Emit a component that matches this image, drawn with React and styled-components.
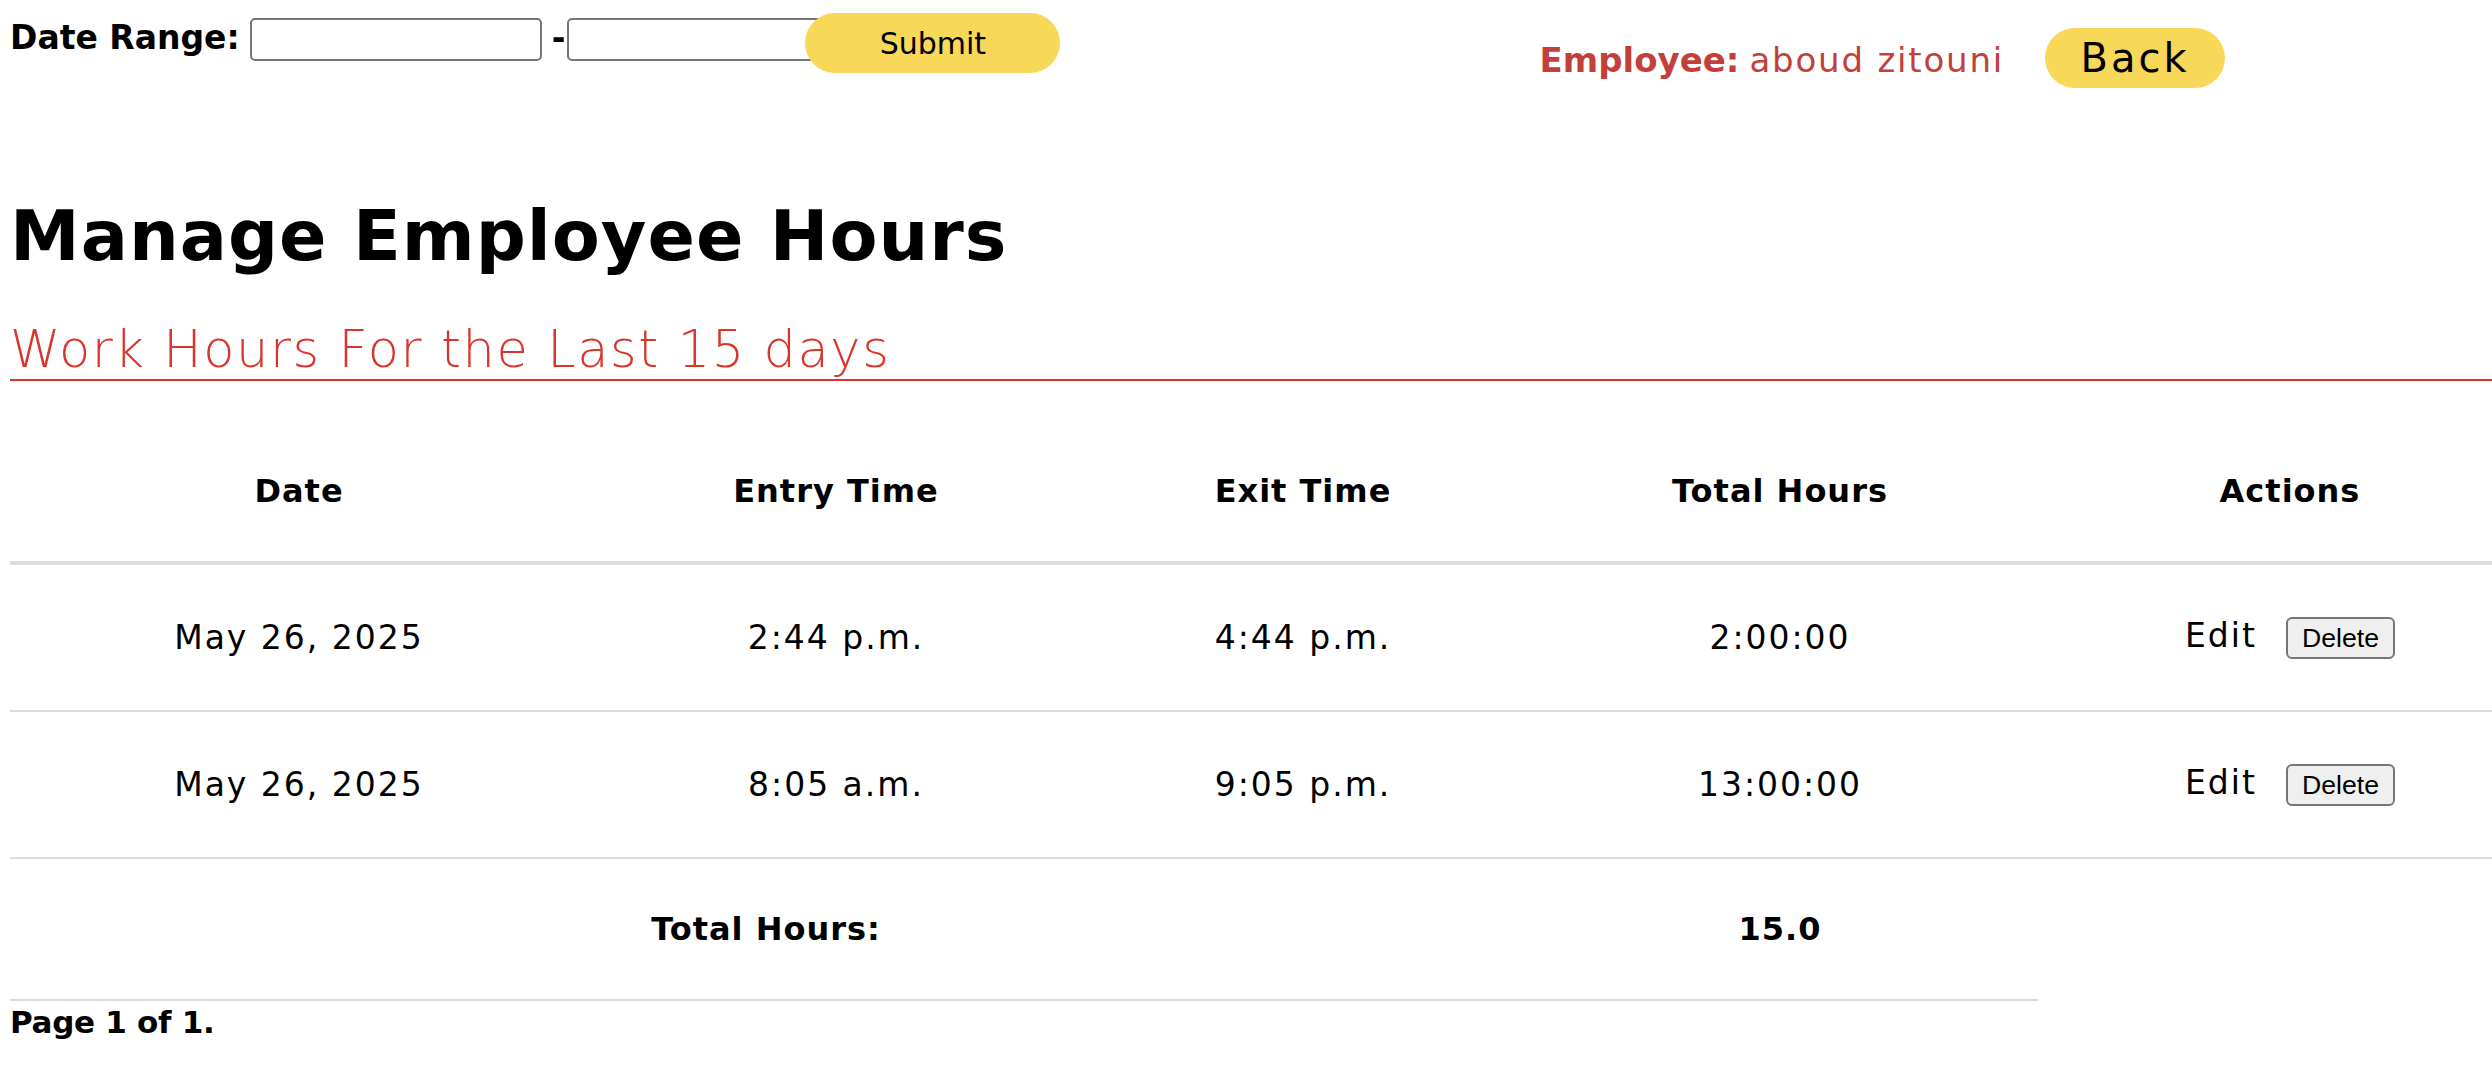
import React from "react";
import styled, { createGlobalStyle } from "styled-components";

const Global = createGlobalStyle`
  html, body { margin: 0; padding: 0; background: #ffffff; overflow-x: hidden; }
  body { font-family: "DejaVu Sans", "Liberation Sans", sans-serif; color: #000; }
  * { box-sizing: border-box; }
`;

const Page = styled.div`
  padding-left: 10px;
`;

const TopBar = styled.header`
  display: flex;
  align-items: flex-start;
  padding-right: 267px;
  height: 88px;
`;

const RangeForm = styled.form`
  display: flex;
  align-items: flex-start;
  padding-top: 13px;
`;

const RangeLabel = styled.label`
  font-size: 33px;
  font-weight: 700;
  margin-top: 5px;
  margin-right: 10px;
  white-space: nowrap;
`;

const DateInput = styled.input`
  width: 292px;
  height: 43px;
  margin-top: 5px;
  border: 2px solid #767676;
  border-radius: 5px;
  background: #fff;
  font-size: 26px;
  padding: 0 6px;
`;

const Dash = styled.span`
  font-size: 33px;
  font-weight: 700;
  margin: 8px 2px 0 10px;
  line-height: 1;
`;

const PillButton = styled.button`
  height: 60px;
  width: ${(p) => p.$w}px;
  margin-left: ${(p) => p.$shift || 0}px;
  border: none;
  border-radius: 30px;
  background: #f7d859;
  color: #000;
  font-family: "DejaVu Sans", sans-serif;
  font-size: ${(p) => p.$size}px;
  letter-spacing: ${(p) => p.$ls || 0}px;
  padding: 0;
  cursor: pointer;
`;

const EmployeeBox = styled.div`
  margin-left: auto;
  padding-top: 28px;
  display: flex;
  align-items: baseline;
  gap: 41px;
`;

const EmployeeName = styled.div`
  font-size: 34px;
  color: #c43e3a;
  letter-spacing: 1.8px;
  white-space: nowrap;
  b { font-weight: 700; letter-spacing: 0; margin-right: 10px; }
`;

const Title = styled.h1`
  margin: 113px 0 0;
  font-size: 70px;
  line-height: 1;
  font-weight: 700;
  letter-spacing: 1px;
`;

const Subtitle = styled.h2`
  margin: 53px 0 0;
  font-size: 51px;
  line-height: 1;
  font-weight: 200;
  letter-spacing: 1.6px;
  color: #d9352c;
  padding-bottom: 4px;
  border-bottom: 2px solid #d9352c;
`;

const Table = styled.table`
  margin-top: 39px;
  width: 2532px;
  table-layout: fixed;
  border-collapse: separate;
  border-spacing: 0;
  text-align: center;
`;

const Col = styled.col`
  width: ${(p) => p.$w}px;
`;

const HeadCell = styled.th`
  height: 145px;
  padding: 0;
  font-size: 32px;
  font-weight: 700;
  letter-spacing: 1px;
  border-bottom: 4px solid #dddddd;
  vertical-align: middle;
`;

const Cell = styled.td`
  height: ${(p) => p.$h || 147}px;
  padding: 0;
  font-size: ${(p) => (p.$bold ? 32 : 33)}px;
  font-weight: ${(p) => (p.$bold ? 700 : 400)};
  letter-spacing: ${(p) => (p.$bold ? 1 : 2)}px;
  border-bottom: 2px solid #dddddd;
  vertical-align: middle;
`;

const EditLink = styled.a`
  color: #000;
  text-decoration: none;
  font-size: 33px;
  letter-spacing: 2px;
`;

const DeleteButton = styled.button`
  margin-left: 29px;
  height: 42px;
  padding: 0 14px;
  border: 2px solid #767676;
  border-radius: 6px;
  background: #efefef;
  font-family: "Liberation Sans", Arial, sans-serif;
  font-size: 26.67px;
  letter-spacing: 0;
  color: #000;
`;

const PageInfo = styled.p`
  margin: 3px 0 0;
  font-size: 31px;
  font-weight: 700;
  letter-spacing: -0.3px;
`;

const rows = [
  { date: "May 26, 2025", entry: "2:44 p.m.", exit: "4:44 p.m.", total: "2:00:00" },
  { date: "May 26, 2025", entry: "8:05 a.m.", exit: "9:05 p.m.", total: "13:00:00" },
];

export default function App() {
  return (
    <Page>
      <Global />
      <TopBar>
        <RangeForm onSubmit={(e) => e.preventDefault()}>
          <RangeLabel>Date Range:</RangeLabel>
          <DateInput type="text" />
          <Dash>-</Dash>
          <DateInput type="text" />
          <PillButton type="submit" $w={255} $shift={-54} $size={30}>
            Submit
          </PillButton>
        </RangeForm>
        <EmployeeBox>
          <EmployeeName>
            <b>Employee:</b>aboud zitouni
          </EmployeeName>
          <PillButton type="button" $w={180} $size={40} $ls={3}>
            Back
          </PillButton>
        </EmployeeBox>
      </TopBar>

      <Title>Manage Employee Hours</Title>
      <Subtitle>Work Hours For the Last 15 days</Subtitle>

      <Table>
        <colgroup>
          <Col $w={578} />
          <Col $w={496} />
          <Col $w={438} />
          <Col $w={516} />
          <Col $w={504} />
        </colgroup>
        <thead>
          <tr>
            <HeadCell>Date</HeadCell>
            <HeadCell>Entry Time</HeadCell>
            <HeadCell>Exit Time</HeadCell>
            <HeadCell>Total Hours</HeadCell>
            <HeadCell>Actions</HeadCell>
          </tr>
        </thead>
        <tbody>
          {rows.map((r, i) => (
            <tr key={i}>
              <Cell>{r.date}</Cell>
              <Cell>{r.entry}</Cell>
              <Cell>{r.exit}</Cell>
              <Cell>{r.total}</Cell>
              <Cell>
                <EditLink href="#">Edit</EditLink>
                <DeleteButton type="button">Delete</DeleteButton>
              </Cell>
            </tr>
          ))}
        </tbody>
        <tfoot>
          <tr>
            <Cell colSpan={3} $bold $h={142}>Total Hours:</Cell>
            <Cell $bold $h={142}>15.0</Cell>
          </tr>
        </tfoot>
      </Table>
      <PageInfo>Page 1 of 1.</PageInfo>
    </Page>
  );
}
